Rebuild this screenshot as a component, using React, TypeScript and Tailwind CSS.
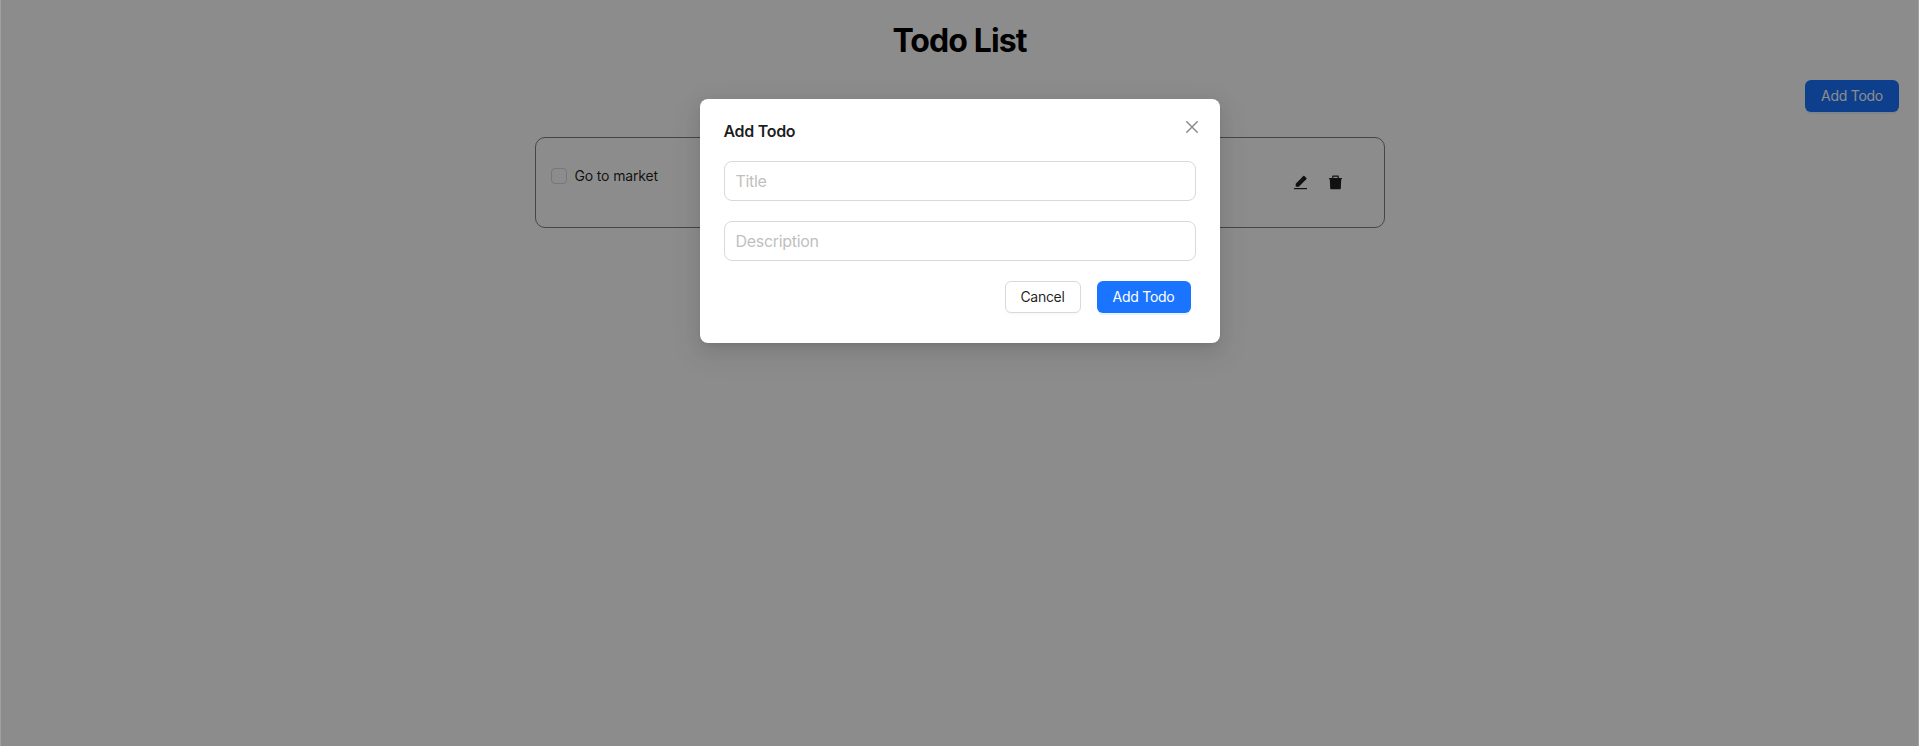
import { useState } from "react";

function PencilLineIcon() {
  return (
    <svg viewBox="0 0 16 16" className="size-4" fill="currentColor" aria-hidden="true">
      <path d="M1 14h13v1.200H1z" />
      <path d="M2.700 12.800V9.700L8.900 3.500l3.100 3.100-6.200 6.200zM9.600 2.800l.8-.8c.3-.3.7-.3 1 0l2 2.100c.3.3.3.7 0 1l-.7.8z" />
      <path d="M8.700 3.700l1.200-1.200 3.100 3.100-1.200 1.200z" />
    </svg>
  );
}

function TrashIcon() {
  return (
    <svg viewBox="0 0 16 16" className="size-4" fill="currentColor" aria-hidden="true">
      <path d="M4.200 2.600c0-.6.4-1 1-1h4.600c.6 0 1 .4 1 1V4h2.700c.3 0 .5.200.5.500v.8h-.8l-.4 9c0 .6-.5 1-1 1H3.200c-.6 0-1-.4-1-1l-.4-9H1v-.8c0-.3.200-.5.500-.5h2.700zm1.200.200V4h4.200V2.800z" />
    </svg>
  );
}

function CloseIcon() {
  return (
    <svg viewBox="0 0 12 12" className="size-3" stroke="currentColor" strokeWidth="1.5" fill="none" aria-hidden="true">
      <path d="M.3.3l11.400 11.400M11.700.3L.3 11.700" />
    </svg>
  );
}

const primary =
  "h-8 w-[94px] rounded-md bg-[#1a74ff] text-sm tracking-[-0.25px] text-white shadow-[0_2px_0_rgba(5,145,255,0.1)]";

export default function App() {
  const [title, setTitle] = useState("");
  const [description, setDescription] = useState("");
  const field =
    "block h-10 w-full rounded-lg border border-[#d9d9d9] bg-white px-[11px] text-base tracking-[-0.3px] outline-none placeholder:text-[#bfbfbf]";

  return (
    <div className="relative h-screen overflow-hidden bg-white font-['Inter',sans-serif] text-black/88">
      <main>
        <h1 className="pt-[17px] text-center text-[32px] leading-[48px] font-bold tracking-[-0.9px] text-black">Todo List</h1>
        <div className="mt-[15px] flex justify-end pr-5">
          <button className={primary}>Add Todo</button>
        </div>
        <section className="mx-auto mt-[25px] flex h-[91px] w-[850px] justify-between rounded-[10px] border border-[#808080] pr-10 pl-[15px]">
          <label className="mt-[26px] flex h-6 items-center gap-2 text-sm tracking-[-0.15px]">
            <span className="size-4 rounded border border-[#d9d9d9] bg-white" />
            Go to market
          </label>
          <div className="mt-[36px] flex gap-[19px]">
            <button className="size-4" aria-label="Edit"><PencilLineIcon /></button>
            <button className="size-4" aria-label="Delete"><TrashIcon /></button>
          </div>
        </section>
      </main>

      <div className="absolute inset-0 flex items-start justify-center border-x border-[#a0a0a0] bg-black/45 bg-clip-padding pt-[99px]">
        <div
          role="dialog"
          className="relative h-[244px] w-[520px] rounded-lg bg-white px-6 pt-5 shadow-[0_6px_16px_0_rgba(0,0,0,0.08),0_3px_6px_-4px_rgba(0,0,0,0.12),0_9px_28px_8px_rgba(0,0,0,0.05)]"
        >
          <button aria-label="Close" className="absolute top-[22px] right-[22px] text-black/45"><CloseIcon /></button>
          <h2 className="text-base leading-6 font-semibold tracking-[-0.3px]">Add Todo</h2>
          <div className="mt-[18px] flex flex-col gap-5">
            <input className={field} placeholder="Title" value={title} onChange={(e) => setTitle(e.target.value)} />
            <input className={field} placeholder="Description" value={description} onChange={(e) => setDescription(e.target.value)} />
            <div className="flex justify-end gap-4 pr-[5px]">
              <button className="h-8 w-[76px] rounded-md border border-[#d9d9d9] bg-white text-sm tracking-[-0.3px] shadow-[0_2px_0_rgba(0,0,0,0.02)]">Cancel</button>
              <button className={primary}>Add Todo</button>
            </div>
          </div>
        </div>
      </div>
    </div>
  );
}
